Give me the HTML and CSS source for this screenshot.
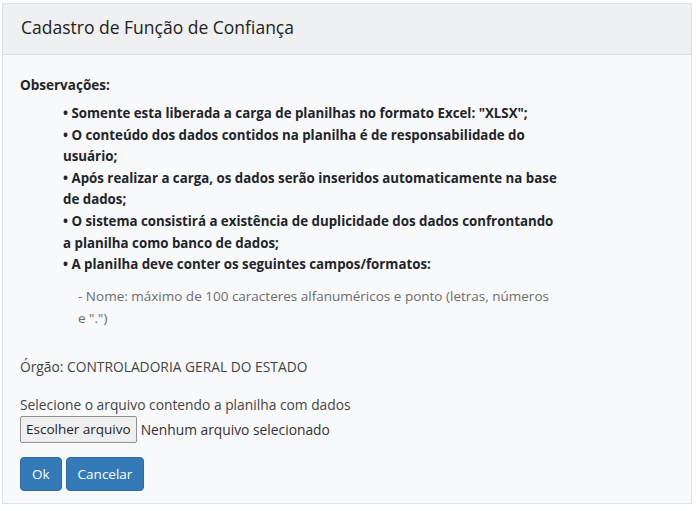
FILE: index.html
```html
<!DOCTYPE html>
<html lang="pt-BR">
<head>
    <meta charset="UTF-8">
    <title>Cadastro de Função de Confiança</title>
    <link rel="stylesheet" href="styles.css">
</head>
<body>

    <div class="panel">
        <div class="panel-heading">Cadastro de Função de Confiança</div>

        <div class="panel-body">
            <p class="obs-title">Observações:</p>
            <ul class="obs-list">
                <li>• Somente esta liberada a carga de planilhas no formato Excel: "XLSX";</li>
                <li>• O conteúdo dos dados contidos na planilha é de responsabilidade do usuário;</li>
                <li>• Após realizar a carga, os dados serão inseridos automaticamente na base de dados;</li>
                <li>• O sistema consistirá a existência de duplicidade dos dados confrontando<br>a planilha como banco de dados;</li>
                <li>• A planilha deve conter os seguintes campos/formatos:</li>
            </ul>
            <p class="obs-field">- Nome: máximo de 100 caracteres alfanuméricos e ponto (letras, números e ".")</p>

            <p class="orgao">Órgão: CONTROLADORIA GERAL DO ESTADO</p>

            <div class="upload">
                <label>Selecione o arquivo contendo a planilha com dados</label>
                <div class="file-row">
                    <span class="file-btn">Escolher arquivo</span>
                    <span class="file-name">Nenhum arquivo selecionado</span>
                </div>
            </div>

            <div class="actions">
                <button class="btn">Ok</button>
                <button class="btn">Cancelar</button>
            </div>
        </div>
    </div>

</body>
</html>
```

FILE: styles.css
```css
body {
    font-family: 'Open Sans', 'Noto Sans', sans-serif;
    font-size: 13.5px;
    color: #333;
    margin: 0;
    background: white;
}
.panel {
    margin: 3px 5px 0 2px;
    height: 501px;
    box-sizing: border-box;
    border: 1px solid #dfe1e4;
    background: #f8f9fa;
}
.panel-heading {
    background: #eff0f2;
    border-bottom: 1px solid #dcdee1;
    height: 50px;
    padding-left: 18px;
    font-size: 17.5px;
    line-height: 47px;
    color: #222;
}
.panel-body {
    padding: 21px 17px 0 17px;
}
.obs-title {
    font-weight: bold;
    color: #212529;
    margin: 0 0 9px 0;
}
.obs-list {
    list-style: none;
    margin: 0;
    padding: 0 0 0 43px;
    width: 508px;
    font-weight: bold;
    font-size: 13.3px;
    color: #212529;
    line-height: 21.6px;
}
.obs-field {
    margin: 9px 0 0 58px;
    width: 472px;
    color: #6c6c6c;
    line-height: 22px;
}
.orgao {
    margin: 28px 0 0 0;
    color: #444;
    font-size: 13.8px;
}
.upload {
    margin-top: 19px;
    color: #444;
    font-size: 13.8px;
}
.upload label {
    display: block;
    line-height: 20px;
}
.file-row {
    display: flex;
    align-items: center;
    gap: 4px;
    margin-top: 1px;
}
.file-btn {
    border: 1px solid #8f8f8f;
    border-radius: 2px;
    background: #efefef;
    color: #222;
    padding: 3px 5px;
    line-height: 19px;
    font-size: 13.5px;
}
.file-name {
    color: #333;
}
.actions {
    display: flex;
    gap: 4px;
    margin-top: 14px;
}
.btn {
    font-family: inherit;
    font-size: 13.5px;
    background: #337ab7;
    color: white;
    border: 1px solid #2e6da4;
    border-radius: 4px;
    height: 34px;
    padding: 0 11px;
    cursor: pointer;
}
```
